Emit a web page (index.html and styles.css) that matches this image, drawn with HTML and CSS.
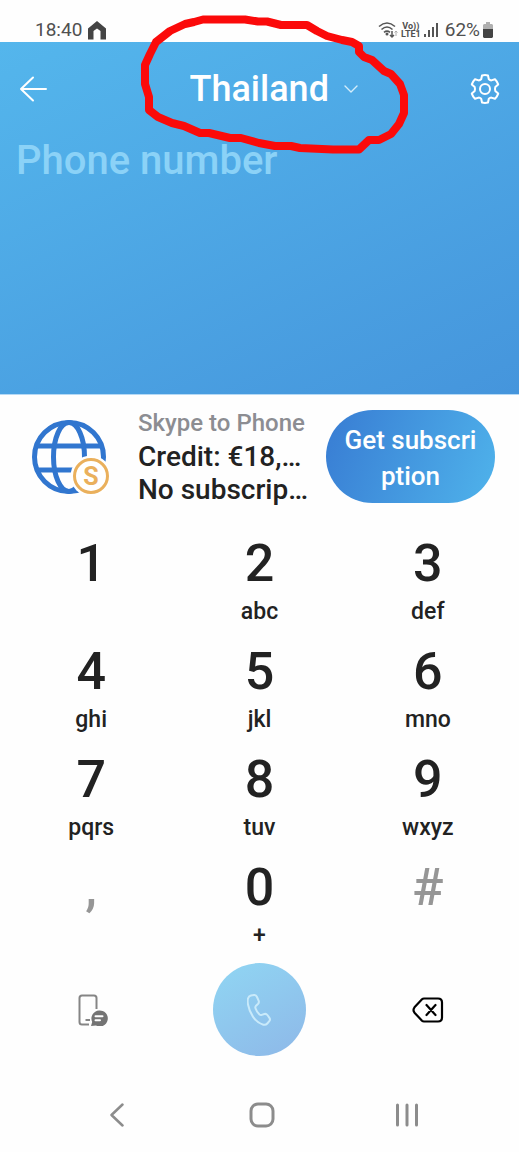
FILE: index.html
```html
<!DOCTYPE html>
<html lang="en">
<head>
<meta charset="utf-8">
<meta name="viewport" content="width=device-width, initial-scale=1">
<title>Skype to Phone</title>
<link rel="stylesheet" href="styles.css">
</head>
<body>
<div class="phone">
  <div class="status">
    <div class="status-group">
      <span>18:40</span>
      <svg width="20" height="20" viewBox="0 0 20 20"><path d="M1 19.500V8.500L10 1l9 7.500v11h-5.500v-8.500L10 8.500 6.500 11v8.500z" fill="#444"/></svg>
    </div>
    <div class="status-group status-right">
      <svg width="20" height="18" viewBox="0 0 20 18" fill="none" stroke="#555" stroke-width="1.6"><path d="M1 5.500Q9 -1.500 17 5.500M3.500 8.500Q9 3.500 14.500 8.500M6 11.300Q9 8.800 12 11.300"/><circle cx="9" cy="13" r=".7" fill="#555"/><path d="M14 10v6m-2-2 2 2 2-2" stroke-width="1.500"/><path d="M18 15v-5m-1.500 1.500L18 10l1.500 1.500" stroke="#aaa" stroke-width="1"/></svg>
      <span class="volte"><span>Vo))</span><span>LTE1</span></span>
      <svg width="14" height="14" viewBox="0 0 14 14" fill="#555"><path d="M0 11h2v3H0zM4 7h2v7H4zM8 4h2v10H8zM12 0h2v14h-2z"/></svg>
      <span class="battery-level">62%</span>
      <svg width="10" height="16" viewBox="0 0 10 16"><path d="M3 0h4v2h2l1 1v5H0V3l1-1h2z" fill="#b0b0b0"/><path d="M0 7h10v8l-1 1H1l-1-1z" fill="#444"/></svg>
    </div>
  </div>

  <header class="header">
    <div class="toolbar">
      <button class="icon-button" type="button" aria-label="Back">
        <svg width="28" height="26" viewBox="0 0 28 26" fill="none" stroke="#fff" stroke-width="2" stroke-linecap="round" stroke-linejoin="round"><path d="M27 13H2M14 1.500 2 13l12 11.500"/></svg>
      </button>
      <div class="country">
        <select class="country-select" aria-label="Country"><option>Thailand</option></select>
        <svg class="chevron" width="14" height="8" viewBox="0 0 14 8" fill="none" stroke="#d3edfb" stroke-width="1.400" stroke-linecap="round" stroke-linejoin="round"><path d="M1 1l6 6 6-6"/></svg>
      </div>
      <button class="icon-button settings" type="button" aria-label="Settings">
        <svg width="30" height="32" viewBox="0 0 30 32" fill="none" stroke="#fff" stroke-width="2" stroke-linejoin="round"><path d="M12 2.500Q15 1.700 18 2.500L18.800 6.300Q20 7.300 21.300 7.400L25 6.200Q27.200 8.400 28.200 11.400L25.300 14Q24.700 16 25.300 18L28.200 20.600Q27.200 23.600 25 25.800L21.300 24.600Q20 24.700 18.800 25.700L18 29.500Q15 30.300 12 29.500L11.200 25.700Q10 24.700 8.700 24.600L5 25.800Q2.800 23.600 1.800 20.600L4.700 18Q5.300 16 4.700 14L1.800 11.400Q2.800 8.400 5 6.200L8.700 7.400Q10 7.300 11.200 6.300Z"/><circle cx="15" cy="16" r="5"/></svg>
      </button>
    </div>
    <input class="number" type="tel" placeholder="Phone number" aria-label="Phone number">
  </header>

  <section class="account">
    <svg class="globe" width="78" height="78" viewBox="0 0 78 78" fill="none" stroke="#3176cf" stroke-width="5">
      <circle cx="37" cy="39" r="34.500"/>
      <ellipse cx="37" cy="39" rx="15.500" ry="34.500"/>
      <path d="M4.500 28h65M4.500 52h65"/>
      <circle cx="59" cy="58" r="20.500" fill="#fff" stroke="none"/>
      <circle cx="59" cy="58" r="16.500" stroke="#eab05c" stroke-width="3"/>
      <text x="59" y="67" class="coin-letter">S</text>
    </svg>
    <div class="credit">
      <p class="credit-title">Skype to Phone</p>
      <p>Credit: €18,…</p>
      <p>No subscrip…</p>
    </div>
    <button class="subscribe" type="button">Get subscription</button>
  </section>

  <main class="keypad">
    <button class="key" type="button">1</button>
    <button class="key" type="button">2<span class="letters">abc</span></button>
    <button class="key" type="button">3<span class="letters">def</span></button>
    <button class="key" type="button">4<span class="letters">ghi</span></button>
    <button class="key" type="button">5<span class="letters">jkl</span></button>
    <button class="key" type="button">6<span class="letters">mno</span></button>
    <button class="key" type="button">7<span class="letters">pqrs</span></button>
    <button class="key" type="button">8<span class="letters">tuv</span></button>
    <button class="key" type="button">9<span class="letters">wxyz</span></button>
    <button class="key muted" type="button">,</button>
    <button class="key" type="button">0<span class="letters">+</span></button>
    <button class="key muted" type="button">#</button>
  </main>

  <div class="actions">
    <button class="icon-button" type="button" aria-label="Send SMS">
      <svg width="34" height="32" viewBox="-4 0 34 32"><path d="M11 30.500H4Q1.500 30.500 1.500 28V4Q1.500 1.500 4 1.500h12q2.500 0 2.500 2.500V15M7.500 26H12" fill="none" stroke="#858585" stroke-width="2"/><path d="M21 16.500a8 8 0 1 1-3 15l-5 .5 1.200-4A8 8 0 0 1 21 16.500z" fill="#747474"/><path d="M17.500 22.300h7M17.500 26.300h4.500" stroke="#fff" stroke-width="2" stroke-linecap="round"/></svg>
    </button>
    <button class="call" type="button" aria-label="Call">
      <svg width="24" height="32" viewBox="0 0 24 32" fill="none" stroke="#c9eafa" stroke-width="2" stroke-linejoin="round"><path d="M4 1.500L7 1Q9 .8 10 3l1.700 3.800q.6 1.800-.8 3.200L8.800 12q-.8 1-.3 2.200 1.200 3.800 4 6.300 1 .8 2.200.4l2.700-.9q1.800-.5 3 1l2 2.800q1.200 1.700-.1 3.300l-2 2.400q-1.500 1.800-4 1.200C7.500 28.200 2.500 18.500 1 10.500 0 5 .9 2.300 4 1.500z"/></svg>
    </button>
    <button class="icon-button" type="button" aria-label="Delete">
      <svg width="32" height="26" viewBox="0 0 32 26" fill="none" stroke="#000" stroke-width="2.200" stroke-linecap="round" stroke-linejoin="round"><path d="M12 1.500h14q4 0 4 4v15q0 4-4 4H12q-1.200 0-2-.8l-7.500-8q-2-2.700 0-5.400l7.500-8q.8-.8 2-.8zM14.500 8l9 10M23.500 8l-9 10"/></svg>
    </button>
  </div>

  <nav class="system-nav" aria-label="System">
    <button class="icon-button" type="button" aria-label="System back"><svg width="14" height="24" viewBox="0 0 14 24" fill="none" stroke="#8c8c8c" stroke-width="2.500" stroke-linecap="round" stroke-linejoin="round"><path d="M12.500 1.500L1.500 12l11 10.500"/></svg></button>
    <button class="icon-button" type="button" aria-label="Home"><svg width="26" height="26" viewBox="0 0 26 26" fill="none" stroke="#8c8c8c" stroke-width="3"><rect x="2" y="2" width="22" height="22" rx="7"/></svg></button>
    <button class="icon-button" type="button" aria-label="Recent apps"><svg width="24" height="24" viewBox="0 0 24 24" fill="none" stroke="#8c8c8c" stroke-width="3" stroke-linecap="round"><path d="M2.500 2v20M12 2v20M21.500 2v20"/></svg></button>
  </nav>

  <svg class="marker" width="270" height="160" viewBox="140 0 270 160" fill="none" stroke="#fb0a0a" stroke-width="8" stroke-linejoin="round"><path d="M209 19.500H245L258 21.500H267L281 25H307L317 31 327 36 342 40 352 42 359 46V52L364 57 372 60 384 71 391 74 400 84 404 95V113L399 124 391 134 379 140H369L359 149.500H333L300 148 291 146H275L259 143 241 138H230L209 133H200L184 126 172 123 158 117 149 110V97L145 84V65L150 54 156 42 170 31 185 24 194 22 203 19.500z"/></svg>
</div>
</body>
</html>
```
FILE: styles.css
```css
* {
  box-sizing: border-box;
}

body {
  margin: 0;
  background: #fefefe;
  color: #222;
  font-family: Roboto, "Liberation Sans", sans-serif;
}

button,
input,
select {
  margin: 0;
  padding: 0;
  border: 0;
  background: none;
  color: inherit;
  font: inherit;
}

svg {
  display: block;
  flex: none;
}

p {
  margin: 0;
}

.phone {
  position: relative;
  min-height: 100vh;
}

.status {
  display: flex;
  justify-content: space-between;
  height: 42px;
  padding: 18px 26px 0 35px;
  color: #505050;
  font-size: 19px;
  line-height: 24px;
}

.status-group {
  display: flex;
  align-items: center;
  gap: 5px;
}

.status-right {
  gap: 3px;
}

.battery-level {
  padding-left: 4px;
}

.volte {
  display: flex;
  flex-direction: column;
  align-items: center;
  font-size: 9px;
  font-weight: 700;
  line-height: 8px;
}

.header {
  min-height: 353px;
  padding: 17px 16px 0;
  border-bottom: 1px solid #b5d9f5;
  background: linear-gradient(155deg, #54b6ec, #4595dc);
  color: #fff;
}

.toolbar {
  display: grid;
  grid-template-columns: 1fr auto 1fr;
  align-items: center;
  height: 60px;
  padding: 0 3px;
}

.icon-button {
  display: flex;
  justify-self: start;
}

.settings {
  justify-self: end;
}

.country {
  position: relative;
}

.country-select {
  appearance: none;
  padding: 0 28px;
  font-size: 36px;
  font-weight: 500;
  line-height: 44px;
}

.chevron {
  position: absolute;
  top: 50%;
  right: 0;
  margin-top: -4px;
  pointer-events: none;
}

.number {
  width: 100%;
  height: 52px;
  margin-top: 15px;
  font-size: 40px;
  font-weight: 500;
}

.number::placeholder {
  color: #8bd2f7;
  opacity: 1;
}

.account {
  display: grid;
  grid-template-columns: auto 1fr auto;
  align-items: center;
  padding: 12px 24px 28px 32px;
}

.credit {
  padding-left: 28px;
  font-size: 28px;
  font-weight: 500;
  line-height: 33px;
  white-space: nowrap;
}

.credit-title {
  color: #8c8d92;
  font-size: 24px;
}

.coin-letter {
  fill: #eab05c;
  stroke: none;
  font-size: 25px;
  font-weight: 700;
  text-anchor: middle;
}

.subscribe {
  width: 169px;
  padding: 12px 18px 9px;
  border-radius: 47px;
  background: linear-gradient(110deg, #387cd3, #4fb3eb);
  color: #fff;
  font-size: 26px;
  font-weight: 500;
  line-height: 36px;
  word-break: break-all;
}

.keypad {
  display: grid;
  grid-template-columns: repeat(3, 1fr);
  row-gap: 16px;
  padding: 0 7px;
}

.key {
  display: flex;
  flex-direction: column;
  align-items: center;
  gap: 4px;
  height: 92px;
  font-size: 52px;
  font-weight: 500;
  line-height: 60px;
}

.letters {
  font-size: 23px;
  line-height: 28px;
}

.muted {
  color: #969696;
}

.actions {
  display: grid;
  grid-template-columns: repeat(3, 1fr);
  place-items: center;
  padding: 13px 7px 0;
}

.actions .icon-button,
.system-nav .icon-button {
  justify-self: center;
}

.call {
  display: grid;
  place-items: center;
  width: 93px;
  height: 93px;
  border-radius: 50%;
  background: linear-gradient(150deg, #90d6f3, #8eb8e8);
}

.system-nav {
  display: grid;
  grid-template-columns: repeat(3, 1fr);
  place-items: center;
  padding: 46px 40px 24px 44px;
}

.marker {
  position: absolute;
  top: 0;
  left: calc(50% - 120px);
  pointer-events: none;
}
```
